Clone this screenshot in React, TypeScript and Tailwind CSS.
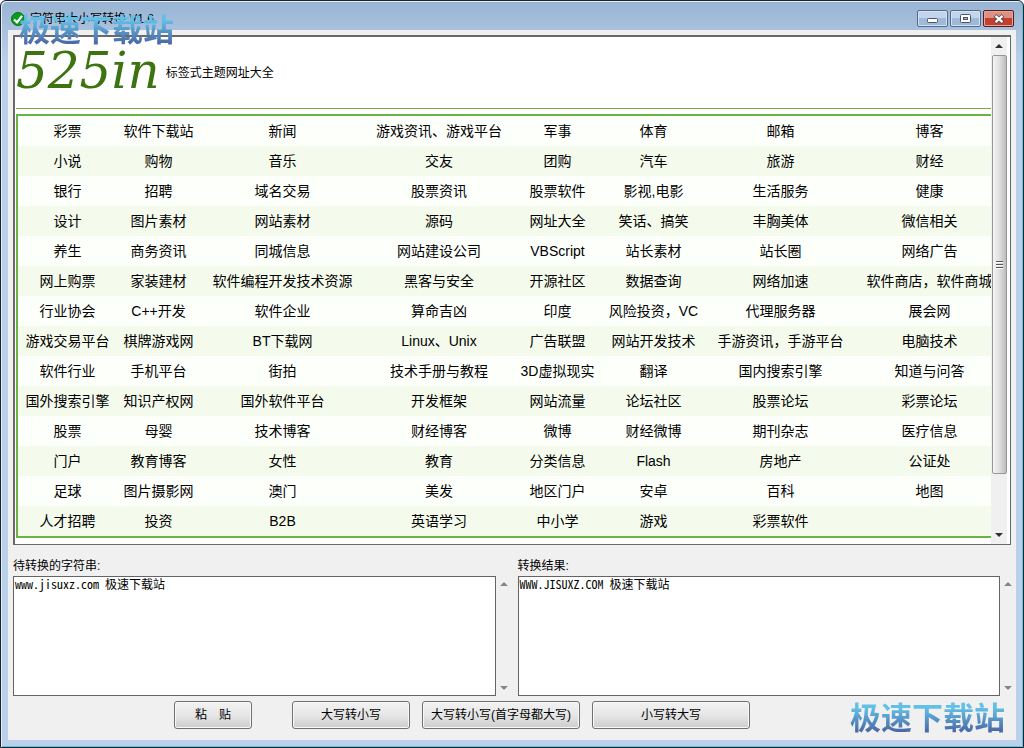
import { useState } from "react";

const rows = [
  ["彩票", "软件下载站", "新闻", "游戏资讯、游戏平台", "军事", "体育", "邮箱", "博客"],
  ["小说", "购物", "音乐", "交友", "团购", "汽车", "旅游", "财经"],
  ["银行", "招聘", "域名交易", "股票资讯", "股票软件", "影视,电影", "生活服务", "健康"],
  ["设计", "图片素材", "网站素材", "源码", "网址大全", "笑话、搞笑", "丰胸美体", "微信相关"],
  ["养生", "商务资讯", "同城信息", "网站建设公司", "VBScript", "站长素材", "站长圈", "网络广告"],
  ["网上购票", "家装建材", "软件编程开发技术资源", "黑客与安全", "开源社区", "数据查询", "网络加速", "软件商店，软件商城"],
  ["行业协会", "C++开发", "软件企业", "算命吉凶", "印度", "风险投资，VC", "代理服务器", "展会网"],
  ["游戏交易平台", "棋牌游戏网", "BT下载网", "Linux、Unix", "广告联盟", "网站开发技术", "手游资讯，手游平台", "电脑技术"],
  ["软件行业", "手机平台", "街拍", "技术手册与教程", "3D虚拟现实", "翻译", "国内搜索引擎", "知道与问答"],
  ["国外搜索引擎", "知识产权网", "国外软件平台", "开发框架", "网站流量", "论坛社区", "股票论坛", "彩票论坛"],
  ["股票", "母婴", "技术博客", "财经博客", "微博", "财经微博", "期刊杂志", "医疗信息"],
  ["门户", "教育博客", "女性", "教育", "分类信息", "Flash", "房地产", "公证处"],
  ["足球", "图片摄影网", "澳门", "美发", "地区门户", "安卓", "百科", "地图"],
  ["人才招聘", "投资", "B2B", "英语学习", "中小学", "游戏", "彩票软件", ""],
];

const capitalize = (s: string) =>
  s.toLowerCase().replace(/\b[a-z]/g, (c) => c.toUpperCase());

const Arrow = ({ down, muted }: { down?: boolean; muted?: boolean }) => (
  <svg
    width="8"
    height="4"
    viewBox="0 0 8 4"
    className={muted ? "fill-[#868686]" : "fill-[#303030]"}
  >
    <path d={down ? "M0 0H8L4 4Z" : "M0 4H8L4 0Z"} />
  </svg>
);

const PushButton = ({
  children,
  className,
  onClick,
}: {
  children: string;
  className: string;
  onClick: () => void;
}) => (
  <button
    type="button"
    onClick={onClick}
    className={`h-7 rounded-[3px] border border-[#707070] bg-linear-to-b from-[#f3f3f3] via-[#e6e6e6] to-[#cdcdcd] text-center whitespace-pre shadow-[inset_0_0_0_1px_#f8f8f8] ${className}`}
  >
    {children}
  </button>
);

const TextPane = ({
  id,
  label,
  value,
  onChange,
}: {
  id: string;
  label: string;
  value: string;
  onChange: (v: string) => void;
}) => (
  <div className="min-w-0 flex-1">
    <label htmlFor={id} className="block h-4 leading-4">
      {label}
    </label>
    <div className="mt-0.5 flex h-[120px]">
      <textarea
        id={id}
        value={value}
        onChange={(e) => onChange(e.target.value)}
        spellCheck={false}
        className="min-w-0 flex-1 resize-none border border-[#646464] bg-white px-px font-['Noto_Sans_Mono_CJK_SC','Liberation_Serif','Noto_Sans_CJK_SC',monospace] leading-[14px] outline-none"
      />
      <div className="flex w-4 flex-col items-center justify-between py-1.5">
        <Arrow muted />
        <Arrow muted down />
      </div>
    </div>
  </div>
);

const Watermark = ({ className }: { className: string }) => (
  <div
    className={`pointer-events-none absolute bg-linear-to-b from-[#62bfe6] from-20% to-[#4a68a5] to-85% bg-clip-text text-[31px] leading-9 font-bold text-transparent ${className}`}
  >
    极速下载站
  </div>
);

const CaptionButtons = () => (
  <div className="flex gap-0.5">
    <button
      type="button"
      aria-label="最小化"
      className="flex h-[17px] w-[31px] items-center justify-center rounded-[2px] border border-[#53698c] bg-linear-to-b from-[#c3d5ea] from-50% to-[#9fb9d8] to-50% shadow-[inset_0_0_0_1px_#d5e3f3]"
    >
      <svg width="11" height="5" viewBox="0 0 11 5" className="mt-1">
        <rect x="0.5" y="0.5" width="10" height="4" rx="1" fill="#fff" stroke="#4b5565" />
      </svg>
    </button>
    <button
      type="button"
      aria-label="最大化"
      className="flex h-[17px] w-[31px] items-center justify-center rounded-[2px] border border-[#53698c] bg-linear-to-b from-[#c3d5ea] from-50% to-[#9fb9d8] to-50% shadow-[inset_0_0_0_1px_#d5e3f3]"
    >
      <svg width="11" height="9" viewBox="0 0 11 9">
        <rect x="0.5" y="0.5" width="10" height="8" rx="1" fill="#fff" stroke="#4b5565" />
        <rect x="3.5" y="3.5" width="4" height="2" fill="#9fb9d8" stroke="#4b5565" />
      </svg>
    </button>
    <button
      type="button"
      aria-label="关闭"
      className="flex h-[17px] w-[31px] items-center justify-center rounded-[2px] border border-[#5a1a1a] bg-linear-to-b from-[#dd9186] from-50% to-[#c2402c] to-50% shadow-[inset_0_0_0_1px_#e5a79d]"
    >
      <svg width="12" height="10" viewBox="0 0 12 10">
        <path d="M2 1.5L10 8.5M10 1.5L2 8.5" stroke="#5b4a52" strokeWidth="4" />
        <path d="M2.5 1.9L9.5 8.1M9.5 1.9L2.5 8.1" stroke="#fff" strokeWidth="2.2" />
      </svg>
    </button>
  </div>
);

export default function App() {
  const [source, setSource] = useState("www.jisuxz.com 极速下载站");
  const [result, setResult] = useState("WWW.JISUXZ.COM 极速下载站");

  const paste = async () => {
    try {
      setSource(await navigator.clipboard.readText());
    } catch (err) {
      console.error("Paste failed:", err);
    }
  };

  return (
    <div className="relative flex min-h-screen flex-col rounded-t-md border border-[#1b2530] bg-[#b9d1ea] bg-linear-to-b from-[#98b3d3] to-[#b9d1ea] to-[60px] px-[7px] pb-[7px] font-['Liberation_Sans','Noto_Sans_CJK_SC',sans-serif] text-xs text-black shadow-[inset_1px_1px_0_#e4eef8,inset_-1px_-1px_0_#5fc3d8]">
      <header className="flex h-[29px] items-center justify-between pt-1.5 pr-0.5 pl-[3px]">
        <div className="flex items-center gap-[5px]">
          <svg width="14" height="14" viewBox="0 0 14 14">
            <circle cx="7" cy="7" r="6.5" fill="#0b9a20" stroke="#087018" />
            <path d="M3 7.5L6 10.3L11 3.8" fill="none" stroke="#fff" strokeWidth="2.2" />
          </svg>
          <h1>字符串大小写转换 V1.6</h1>
        </div>
        <CaptionButtons />
      </header>

      <main className="flex-1 bg-[#f0f0f0] pt-[5px]">
        <section className="mx-[5px] flex h-[510px] border-2 border-r border-b border-[#696969] bg-white">
          <div className="min-w-0 flex-1 overflow-hidden pl-px">
            <div className="flex h-[72px] items-center border-b border-[#7fa83c]">
              <span className="pb-1 font-['DejaVu_Serif',serif] text-[50px] leading-none text-[#3d7411] italic">
                525in
              </span>
              <span className="ml-1.5">标签式主题网址大全</span>
            </div>
            <table className="mt-[5px] w-[calc(100%+12px)] table-fixed border-separate border-spacing-0 border-y-2 border-l-2 border-[#6ab344] text-sm">
              <colgroup>
                <col className="w-[99px]" />
                <col className="w-[83px]" />
                <col className="w-[165px]" />
                <col className="w-[148px]" />
                <col className="w-[89px]" />
                <col className="w-[103px]" />
                <col className="w-[151px]" />
                <col />
              </colgroup>
              <tbody>
                {rows.map((row, i) => (
                  <tr key={i} className="h-[30px] odd:bg-[#fdfffb] even:bg-[#f4fbec]">
                    {row.map((cell, j) => (
                      <td key={j} className="p-0 text-center whitespace-nowrap">
                        {cell}
                      </td>
                    ))}
                  </tr>
                ))}
              </tbody>
            </table>
          </div>
          <div className="mr-[3px] flex w-4 flex-col items-center bg-[#f0f0f0]">
            <div className="flex h-[18px] items-center">
              <Arrow />
            </div>
            <div className="flex h-[419px] w-[15px] items-center justify-center rounded-[2px] border border-[#979797] bg-linear-to-r from-[#f5f5f5] via-[#dfdfdf] to-[#bdbdbd]">
              <svg width="7" height="8" viewBox="0 0 7 8">
                <path d="M0 0.5H7M0 3.5H7M0 6.5H7" stroke="#555" />
                <path d="M0 1.5H7M0 4.5H7M0 7.5H7" stroke="#fff" />
              </svg>
            </div>
            <div className="mt-auto flex h-[18px] items-center">
              <Arrow down />
            </div>
          </div>
        </section>

        <section className="mt-[13px] flex gap-1.5 pl-[5px]">
          <TextPane id="source" label="待转换的字符串:" value={source} onChange={setSource} />
          <TextPane id="result" label="转换结果:" value={result} onChange={setResult} />
        </section>

        <div className="mt-[5px] flex pl-[166px]">
          <PushButton className="w-[78px]" onClick={paste}>
            {"粘　贴"}
          </PushButton>
          <PushButton className="ml-10 w-[118px]" onClick={() => setResult(source.toLowerCase())}>
            大写转小写
          </PushButton>
          <PushButton className="ml-3 w-[158px]" onClick={() => setResult(capitalize(source))}>
            大写转小写(首字母都大写)
          </PushButton>
          <PushButton className="ml-3 w-[158px]" onClick={() => setResult(source.toUpperCase())}>
            小写转大写
          </PushButton>
        </div>
      </main>

      <Watermark className="top-3 left-[18px]" />
      <Watermark className="right-[18px] bottom-2.5" />
    </div>
  );
}
